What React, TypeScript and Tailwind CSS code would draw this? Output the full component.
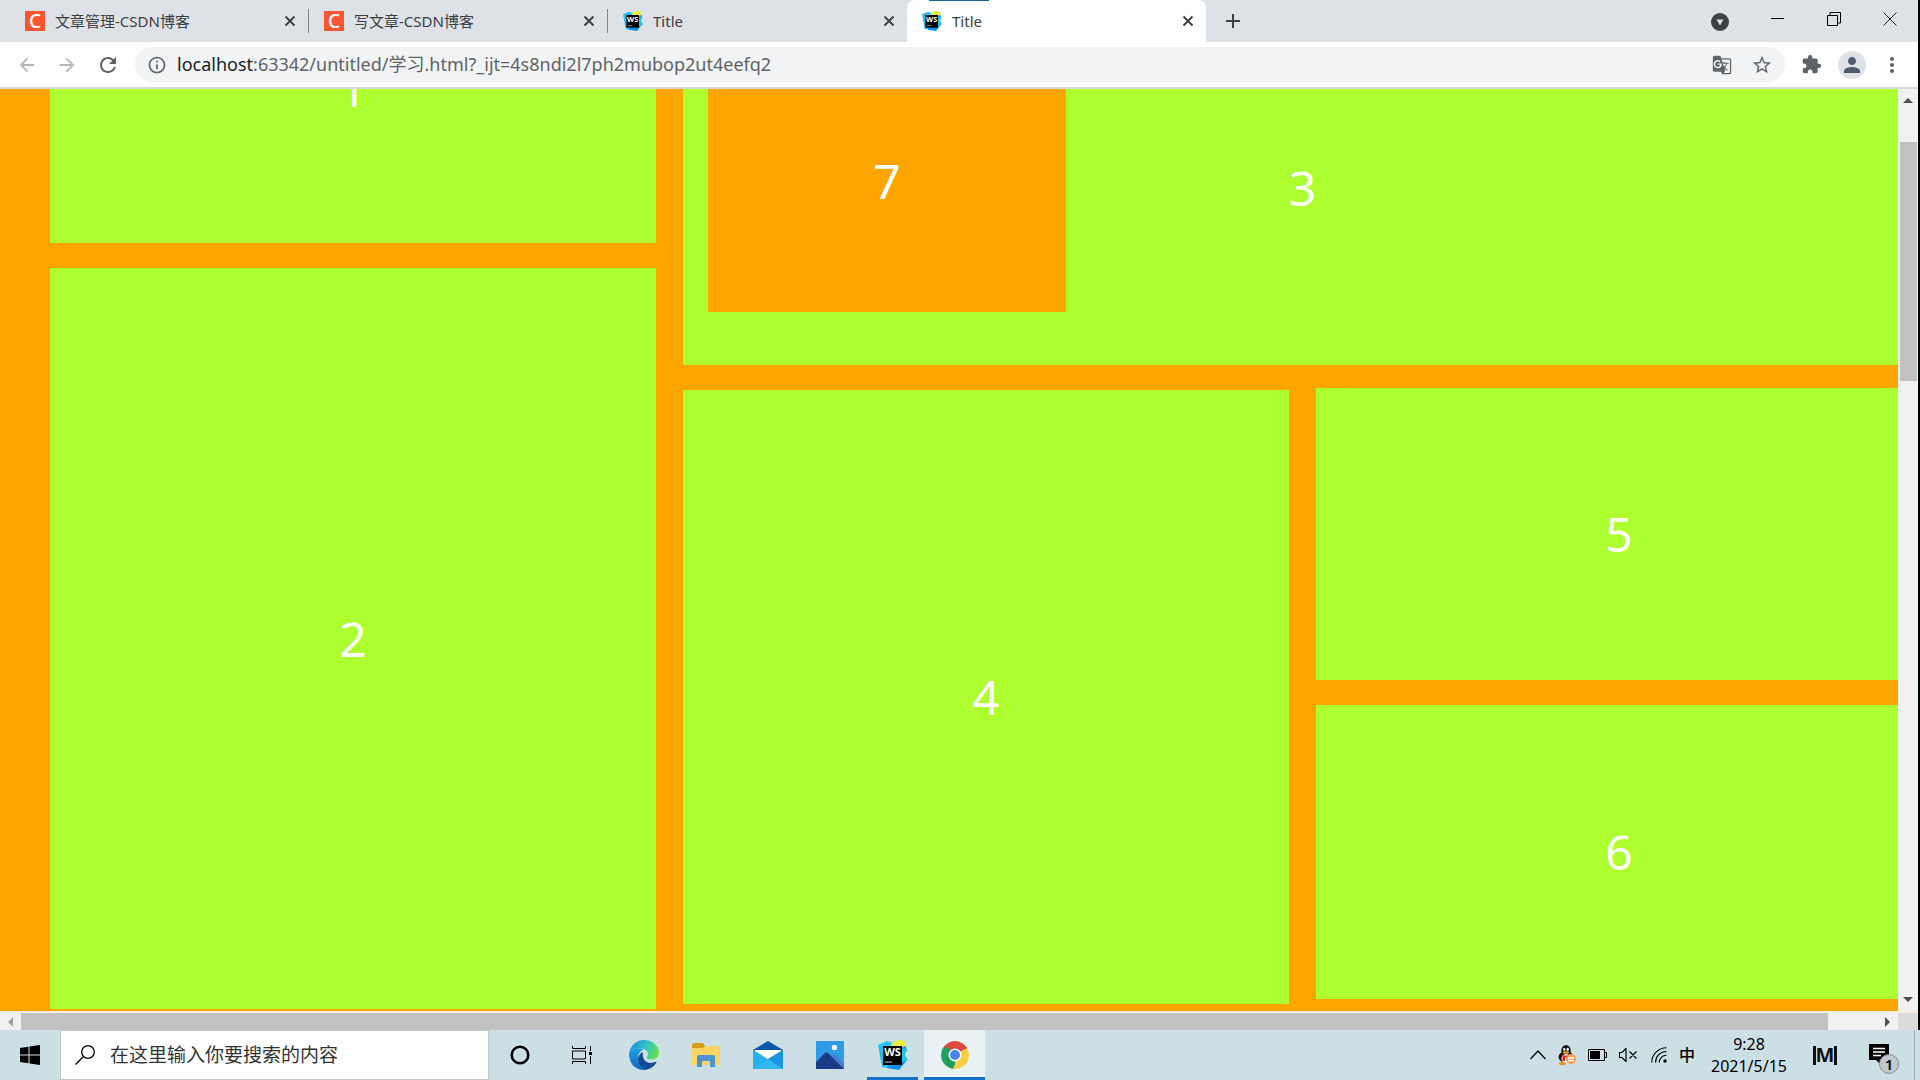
import React, { ReactNode } from 'react';
import clsx from 'clsx';
import {
  MdArrowBack,
  MdArrowForward,
  MdExtension,
  MdGTranslate,
  MdInfoOutline,
  MdMoreVert,
  MdPerson,
  MdRefresh,
  MdStarBorder,
} from 'react-icons/md';

type TabIcon = 'csdn' | 'webstorm';

interface Tab {
  id: number;
  title: string;
  icon: TabIcon;
}

const tabs: Tab[] = [
  { id: 1, title: '文章管理-CSDN博客', icon: 'csdn' },
  { id: 2, title: '写文章-CSDN博客', icon: 'csdn' },
  { id: 3, title: 'Title', icon: 'webstorm' },
  { id: 4, title: 'Title', icon: 'webstorm' },
];

const activeTab = 4;

const CsdnIcon = () => (
  <span className="flex size-5 shrink-0 items-center justify-center bg-[#fc5531] font-['Noto_Sans'] text-[19px] leading-5 font-medium text-white">
    C
  </span>
);

const WebstormIcon = ({ className }: { className: string }) => (
  <svg viewBox="0 0 30 30" className={className}>
    <path d="M0 5l9-4 8 3 2 20-3 5-12-2z" fill="#22c3f3" />
    <path d="M14 3l12-2 3 10-3 3 3 6-8 10-12-2z" fill="#0b8fe8" />
    <path d="M22 8l7 1-2 6 3 5-7 3z" fill="#21c7e8" />
    <path d="M13 4l7-4h6l2 6-6 2-9-1z" fill="#e9f043" />
    <rect x="5" y="6" width="19" height="19" fill="#000" />
    <text
      x="14.500"
      y="16"
      textAnchor="middle"
      fontFamily="Noto Sans, sans-serif"
      fontSize="11"
      fontWeight="700"
      fill="#fff"
    >
      WS
    </text>
    <rect x="7" y="21.500" width="7" height="1.200" fill="#aaa" />
  </svg>
);

const CloseIcon = () => (
  <svg viewBox="0 0 12 12" className="size-3">
    <path d="M1.500 1.500l9 9M10.500 1.500l-9 9" stroke="#3c4043" strokeWidth="1.900" />
  </svg>
);

const TabStrip = () => (
  <div className="relative flex h-[42px] items-stretch bg-[#dee1e6] pl-[10px]">
    <div className="absolute top-0 left-[929px] z-10 h-px w-[60px] bg-[#1b62ae]" />
    {tabs.map((tab) => (
      <div
        key={tab.id}
        className={clsx(
          'flex w-[299px] min-w-0 items-center',
          tab.id === activeTab && 'rounded-t-lg bg-white'
        )}
      >
        <div
          className={clsx(
            'flex h-6 w-full items-center gap-[10px] pr-3 pl-[15px]',
            tab.id < activeTab - 1 && 'border-r border-[#80868b]'
          )}
        >
          {tab.icon === 'csdn' ? (
            <CsdnIcon />
          ) : (
            <WebstormIcon className="size-5 shrink-0" />
          )}
          <span className="flex-1 truncate text-[15px] leading-5 text-[#3c4043]">
            {tab.title}
          </span>
          <button type="button" aria-label="关闭标签页">
            <CloseIcon />
          </button>
        </div>
      </div>
    ))}
    <button type="button" aria-label="新标签页" className="ml-5">
      <svg viewBox="0 0 14 14" className="size-3.5">
        <path d="M7 0v14M0 7h14" stroke="#3c4043" strokeWidth="2" />
      </svg>
    </button>
    <div className="ml-auto flex items-center gap-[42px] pr-[21px] pb-1">
      <button type="button" aria-label="搜索标签页" className="mt-1.5">
        <svg viewBox="0 0 18 18" className="size-[18px]">
          <circle cx="9" cy="9" r="9" fill="#3c4043" />
          <path d="M5.500 6.500h7L9 12.500z" fill="#dee1e6" />
        </svg>
      </button>
      <button type="button" aria-label="最小化">
        <svg viewBox="0 0 14 14" className="size-3.5">
          <path d="M0 6.500h13" stroke="#000" />
        </svg>
      </button>
      <button type="button" aria-label="还原">
        <svg viewBox="0 0 14 14" className="size-3.5">
          <path d="M.5 3.500h10v10H.5zM3 3V.5h10.500V11H11" fill="none" stroke="#000" />
        </svg>
      </button>
      <button type="button" aria-label="关闭">
        <svg viewBox="0 0 14 14" className="size-3.5">
          <path d="M.5.5l13 13M13.500.5l-13 13" stroke="#222" />
        </svg>
      </button>
    </div>
  </div>
);

const Toolbar = () => (
  <div className="flex h-[47px] items-center border-b-2 border-[#d5d7dc] bg-white pr-3.5 pl-4 text-[#5f6368]">
    <div className="flex w-[119px] shrink-0 gap-[18px]">
      <button type="button" aria-label="后退" className="text-[#b4b6b9]">
        <MdArrowBack size={22} />
      </button>
      <button type="button" aria-label="前进" className="text-[#b4b6b9]">
        <MdArrowForward size={22} />
      </button>
      <button type="button" aria-label="重新加载">
        <MdRefresh size={24} />
      </button>
    </div>
    <div className="flex h-[35px] flex-1 items-center rounded-full bg-[#f1f3f4] pr-3 pl-3">
      <MdInfoOutline size={20} />
      <p className="ml-[10px] flex-1 pb-0.5 text-[18px] leading-6">
        <span className="text-[#202124]">localhost</span>
        :63342/untitled/学习.html?_ijt=4s8ndi2l7ph2mubop2ut4eefq2
      </p>
      <button type="button" aria-label="翻译此页" className="mr-[19px]">
        <MdGTranslate size={20} />
      </button>
      <button type="button" aria-label="收藏">
        <MdStarBorder size={22} />
      </button>
    </div>
    <button type="button" aria-label="扩展程序" className="ml-4">
      <MdExtension size={21} />
    </button>
    <button
      type="button"
      aria-label="用户"
      className="ml-4 flex size-7 items-center justify-center rounded-full bg-[#dee1e6] text-[#4c5a70]"
    >
      <MdPerson size={24} />
    </button>
    <button type="button" aria-label="菜单" className="ml-3.5">
      <MdMoreVert size={24} />
    </button>
  </div>
);

const Box = ({ className, children }: { className: string; children: ReactNode }) => (
  <div
    className={clsx(
      'flex shrink-0 items-center justify-center bg-[#adff2f]',
      className
    )}
  >
    {children}
  </div>
);

const PageContent = () => (
  <main className="min-w-0 flex-1 overflow-hidden bg-[#ffa500] text-[48px] leading-none text-white">
    {/* scrolled down by 154px and wider than the viewport */}
    <div className="-mt-[154px] grid w-[calc(100%+51px)] grid-cols-3 gap-x-[27px] pr-[27px] pl-[50px]">
      <div className="flex flex-col gap-[25px]">
        <Box className="h-[308px]">1</Box>
        <Box className="h-[741px]">2</Box>
      </div>
      <div className="col-span-2 flex flex-col gap-[25px]">
        <div className="grid h-[430px] bg-[#adff2f] pt-[76px]">
          <div className="col-start-1 row-start-1 place-self-center">3</div>
          <div className="col-start-1 row-start-1 mb-[53px] ml-[25px] flex h-[262px] w-[358px] items-center justify-center self-end bg-[#ffa500]">
            7
          </div>
        </div>
        <div className="grid grid-cols-2 gap-x-[27px]">
          <Box className="h-[614px]">4</Box>
          <div className="-mt-0.5 flex flex-col gap-[25px]">
            <Box className="h-[292px]">5</Box>
            <Box className="h-[294px]">6</Box>
          </div>
        </div>
      </div>
    </div>
  </main>
);

const VerticalScrollbar = () => (
  <div className="flex w-5 flex-col items-center bg-[#f1f1f1]">
    <svg viewBox="0 0 10 5" className="mt-[9px] h-[5px] w-2.5">
      <path d="M0 5l5-5 5 5z" fill="#505050" />
    </svg>
    <div className="mt-[39px] h-[239px] w-[17px] bg-[#c1c1c1]" />
    <svg viewBox="0 0 10 5" className="mt-auto mb-[9px] h-[5px] w-2.5">
      <path d="M0 0l5 5 5-5z" fill="#505050" />
    </svg>
  </div>
);

const HorizontalScrollbar = () => (
  <div className="flex h-[19px] items-stretch border-t-2 border-[#fbf0e0] bg-[#f1f1f1]">
    <div className="flex w-[21px] items-center pl-2">
      <svg viewBox="0 0 5 10" className="h-2.5 w-[5px]">
        <path d="M5 0v10L0 5z" fill="#a3a3a3" />
      </svg>
    </div>
    <div className="flex-1 bg-[#c1c1c1]" />
    <div className="flex w-[70px] items-center justify-end pr-2">
      <svg viewBox="0 0 5 10" className="h-2.5 w-[5px]">
        <path d="M0 0v10l5-5z" fill="#505050" />
      </svg>
    </div>
    <div className="w-5 bg-[#dcdcdc]" />
  </div>
);

const EdgeIcon = () => (
  <svg viewBox="0 0 30 30" className="size-[30px]">
    <defs>
      <linearGradient id="edge-top" x1="0" x2="1" y1="0.3" y2="0.6">
        <stop offset="0" stopColor="#1f8fe0" />
        <stop offset="0.5" stopColor="#2fc0c8" />
        <stop offset="1" stopColor="#6be04a" />
      </linearGradient>
      <linearGradient id="edge-left" x1="0" x2="0" y1="0" y2="1">
        <stop offset="0" stopColor="#1ba1e2" />
        <stop offset="1" stopColor="#1266c0" />
      </linearGradient>
    </defs>
    <path
      d="M0 14C1 6 7 0 15 0c9 0 15 6.500 15 12.500 0 4.500-3.500 7-7.500 7-3 0-4.800-1-4.800-2 0-.8 1.300-1.500 1.300-3.500 0-3-3-5.500-7.500-5.500C6 8.500 1.500 11 0 14z"
      fill="url(#edge-top)"
    />
    <path
      d="M0 14c1.500-3.800 6-5.500 10.500-5.500 1.500 0 3 .3 4 1-3.500 1.300-5.500 5-5.500 8.500 0 6 4 10.500 9 11.500-1 .4-2 .5-3 .5C6 30 0 23 0 14z"
      fill="url(#edge-left)"
    />
    <path
      d="M14 12c-3 1.500-5 4-5 7 0 5.500 4 10.200 9 10.500 4-.8 7.500-3.500 9.500-7 .3-.6-.3-1-.8-.7C20 25 12 21 14 12z"
      fill="#104c94"
    />
  </svg>
);

const FolderIcon = () => (
  <svg viewBox="0 0 28 24" className="h-6 w-7">
    <path d="M0 2a2 2 0 0 1 2-2h9l2 3-2 3H0z" fill="#d99b1c" />
    <path d="M0 5h11l3-2h12a2 2 0 0 1 2 2v17H0z" fill="#fcd462" />
    <path d="M5 24V14a2 2 0 0 1 2-2h14a2 2 0 0 1 2 2v10h-5v-6h-8v6z" fill="#4a93d4" />
  </svg>
);

const MailIcon = () => (
  <svg viewBox="0 0 30 28" className="h-7 w-[30px]">
    <path d="M0 9l15-9 15 9v3H0z" fill="#0a56a8" />
    <path d="M2 9h26v10H2z" fill="#fff" />
    <path d="M0 9l15 9 15-9v19H0z" fill="#28b0ee" />
    <path d="M15 18L30 9v19z" fill="#1c93de" />
    <path d="M15 18l15 10H0z" fill="#36bdf3" opacity=".6" />
  </svg>
);

const PhotosIcon = () => (
  <svg viewBox="0 0 28 28" className="size-7">
    <rect width="28" height="28" rx="1" fill="#2e9be6" />
    <path d="M14 17l4-4 10 10v5H14z" fill="#4e78d8" />
    <path d="M0 21l9-9a2 2 0 0 1 3 0l16 16H0z" fill="#1a3a86" />
    <circle cx="18.500" cy="6.500" r="2.700" fill="#fff" />
  </svg>
);

const ChromeIcon = () => (
  <svg viewBox="0 0 28 28" className="size-7">
    <path d="M14 14L1.900 7A14 14 0 0 1 26.100 7z" fill="#dd4b3e" />
    <path d="M14 14L26.100 7A14 14 0 0 1 14 28z" fill="#fdcd42" />
    <path d="M14 14v14A14 14 0 0 1 1.900 7z" fill="#1fa060" />
    <path d="M14 7.500h12.400L25 5.500H14z" fill="#dd4b3e" />
    <path d="M8.400 17.200L1.900 7l5-1 3 6z" fill="#1fa060" />
    <path d="M19.600 17.200L14 28l-2-.2 4-9z" fill="#fdcd42" />
    <circle cx="14" cy="14" r="6.500" fill="#fff" />
    <circle cx="14" cy="14" r="5" fill="#4a83f0" />
  </svg>
);

const TaskViewIcon = () => (
  <svg viewBox="0 0 20 20" className="size-5">
    <path
      d="M.5 1v2.500h13V1M.5 19v-2.500h13V19M.5 6h13v8H.5zM18.500 1v5M18.500 11v8"
      fill="none"
      stroke="#000"
    />
    <rect x="17" y="7" width="3" height="3" />
  </svg>
);

const taskbarApps: { name: string; icon: ReactNode }[] = [
  {
    name: 'Cortana',
    icon: (
      <svg viewBox="0 0 20 20" className="size-5">
        <circle cx="10" cy="10" r="8.300" fill="none" stroke="#000" strokeWidth="2.500" />
      </svg>
    ),
  },
  { name: '任务视图', icon: <TaskViewIcon /> },
  { name: 'Edge', icon: <EdgeIcon /> },
  { name: '文件资源管理器', icon: <FolderIcon /> },
  { name: '邮件', icon: <MailIcon /> },
  { name: '照片', icon: <PhotosIcon /> },
];

const Tray = () => (
  <div className="ml-auto flex items-center">
    <div className="flex items-center gap-3">
      <svg viewBox="0 0 16 10" className="h-2.5 w-4">
        <path d="M.5 9L8 1l7.500 8" fill="none" stroke="#000" strokeWidth="1.200" />
      </svg>
      <svg viewBox="0 0 18 20" className="h-5 w-[18px]">
        <ellipse cx="8" cy="12" rx="7.500" ry="5.500" fill="#111" />
        <ellipse cx="8" cy="6" rx="4.800" ry="6" fill="#111" />
        <ellipse cx="8" cy="13.500" rx="4.500" ry="4.500" fill="#fff" />
        <ellipse cx="6.300" cy="4.300" rx="1.200" ry="1.600" fill="#fff" />
        <ellipse cx="9.700" cy="4.300" rx="1.200" ry="1.600" fill="#fff" />
        <ellipse cx="8" cy="7.500" rx="3.200" ry="1.200" fill="#f9a01b" />
        <path d="M3 9c3 2 7 2 10 0v2.500c-2 1-4 1-6 1V16H4.500v-4.500z" fill="#e02020" />
        <ellipse cx="4.500" cy="18.500" rx="3.500" ry="1.500" fill="#f08a1b" />
        <circle cx="13" cy="14" r="5" fill="#ff9a52" />
        <path d="M10 13h6M10 15.500h6" stroke="#fff" strokeWidth="1.300" />
      </svg>
      <svg viewBox="0 0 19 12" className="h-3 w-[19px]">
        <path d="M.5.5h16v11H.5z" fill="none" stroke="#000" />
        <rect x="2" y="2" width="10" height="8" />
        <path d="M17 3.500h1.500v5H17" fill="none" stroke="#000" />
      </svg>
      <svg viewBox="0 0 18 14" className="h-3.5 w-[18px]">
        <path
          d="M.5 4.500H3l4-4v13l-4-4H.5zM10.500 3.500l7 7M17.500 3.500l-7 7"
          fill="none"
          stroke="#000"
          strokeWidth="1.200"
        />
      </svg>
      <svg viewBox="0 0 16 16" className="ml-0.5 size-4">
        <path
          d="M.7 15.500A15 15 0 0 1 15.500.7M4.500 15.500A11 11 0 0 1 15.500 4.500M8.300 15.500a7 7 0 0 1 7.200-7.200"
          fill="none"
          stroke="#000"
          strokeWidth="1.100"
        />
        <circle cx="14" cy="14" r="1.700" />
      </svg>
      <span className="text-[16px] leading-6 font-medium">中</span>
    </div>
    <div className="ml-3.5 w-20 text-center text-[16px] leading-[22px]">
      <p>9:28</p>
      <p>2021/5/15</p>
    </div>
    <div className="ml-6 flex h-[19px] w-6 items-center justify-center border-x-[3px] border-[#111] text-[20px] leading-5 font-bold text-[#111]">
      M
    </div>
    <button type="button" aria-label="通知" className="relative mt-2 mr-[15px] ml-8">
      <svg viewBox="0 0 30 30" className="size-[30px]">
        <path d="M0 0h20v16h-9v4l-4-4H0z" fill="#000" />
        <path d="M4 4.500h12M4 8h12M4 11.500h8" stroke="#fff" strokeWidth="1.300" />
      </svg>
      <span className="absolute right-0 bottom-0 flex size-5 items-center justify-center rounded-full border border-[#8a8f92] bg-[#c3c9cc] text-[15px] leading-5 font-semibold">
        1
      </span>
    </button>
    <div className="w-[6px] self-stretch border-l border-[#9fb0b6]" />
  </div>
);

const Taskbar = () => (
  <footer className="flex h-[50px] items-stretch bg-[#cbdfe5] text-black">
    <button
      type="button"
      aria-label="开始"
      className="flex w-[60px] shrink-0 items-center justify-center"
    >
      <svg viewBox="0 0 20 20" className="size-5">
        <path d="M0 3l8.500-1.300v7.800H0zM9.500 1.500L20 0v9.500H9.500zM0 10.500h8.500v7.800L0 17zM9.500 10.500H20V20L9.500 18.500z" />
      </svg>
    </button>
    <label className="flex w-[429px] items-center border border-[#c4c8ca] bg-white pl-3.5">
      <svg viewBox="0 0 20 20" className="size-5 shrink-0">
        <circle cx="13" cy="7" r="6.300" fill="none" stroke="#000" strokeWidth="1.300" />
        <path d="M8.500 11.500L.5 19.500" stroke="#000" strokeWidth="1.300" />
      </svg>
      <input
        type="text"
        aria-label="搜索"
        placeholder="在这里输入你要搜索的内容"
        className="ml-[15px] w-full text-[19px] leading-6 outline-none placeholder:text-[#333]"
      />
    </label>
    <nav className="flex items-stretch">
      {taskbarApps.map((app) => (
        <button
          key={app.name}
          type="button"
          aria-label={app.name}
          className="flex w-[62px] items-center justify-center"
        >
          {app.icon}
        </button>
      ))}
      <button
        type="button"
        aria-label="WebStorm"
        className="mx-1.5 flex w-[51px] items-center justify-center border-b-[3px] border-[#1372c8] pt-[3px]"
      >
        <WebstormIcon className="size-[30px]" />
      </button>
      <button
        type="button"
        aria-label="Chrome"
        className="flex w-[61px] items-center justify-center border-b-[3px] border-[#1372c8] bg-[#e8f1f4] pt-[3px]"
      >
        <ChromeIcon />
      </button>
    </nav>
    <Tray />
  </footer>
);

const App = () => {
  return (
    <div className="flex h-screen flex-col overflow-hidden font-['Noto_Sans','Noto_Sans_CJK_SC',sans-serif]">
      <div className="flex min-h-0 flex-1 flex-col border-r-2 border-black">
        <TabStrip />
        <Toolbar />
        <div className="flex min-h-0 flex-1">
          <PageContent />
          <VerticalScrollbar />
        </div>
        <HorizontalScrollbar />
      </div>
      <Taskbar />
    </div>
  );
};

export default App;
